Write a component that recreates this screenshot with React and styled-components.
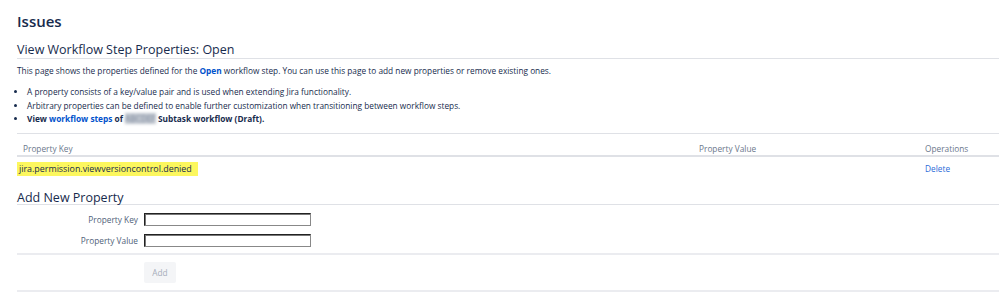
import React from 'react';
import styled, { createGlobalStyle } from 'styled-components';

const GlobalStyle = createGlobalStyle`
  html, body {
    margin: 0;
    padding: 0;
    background: #fff;
  }
  body {
    font-family: 'Open Sans', 'Noto Sans', sans-serif;
    color: #172b4d;
  }
`;

const App = () => {
  return (
    <>
      <GlobalStyle />
      <SPage>
        <STitle>Issues</STitle>
        <SHeading>View Workflow Step Properties: Open</SHeading>
        <SIntro>
          This page shows the properties defined for the <SStrongLink>Open</SStrongLink> workflow step. You can use
          this page to add new properties or remove existing ones.
        </SIntro>
        <SList>
          <li>A property consists of a key/value pair and is used when extending Jira functionality.</li>
          <li>Arbitrary properties can be defined to enable further customization when transitioning between workflow steps.</li>
          <li>
            <b>
              View <SStrongLink>workflow steps</SStrongLink> of <SBlur>ABCDEF</SBlur> Subtask workflow (Draft).
            </b>
          </li>
        </SList>

        <STable>
          <thead>
            <tr>
              <STh>Property Key</STh>
              <STh>Property Value</STh>
              <STh>Operations</STh>
            </tr>
          </thead>
          <tbody>
            <tr>
              <STd>
                <SHighlight>jira.permission.viewversioncontrol.denied</SHighlight>
              </STd>
              <STd></STd>
              <STd>
                <SLink>Delete</SLink>
              </STd>
            </tr>
          </tbody>
        </STable>

        <SHeading tight>Add New Property</SHeading>
        <SForm>
          <SField>
            <SLabel>Property Key</SLabel>
            <SInput />
          </SField>
          <SField>
            <SLabel>Property Value</SLabel>
            <SInput />
          </SField>
        </SForm>
        <SButtons>
          <SButton disabled>Add</SButton>
        </SButtons>
      </SPage>
    </>
  );
};

export default App;

const SPage = styled.div`
  padding: 9px 0 0 17px;
  width: 982px;
`;

const STitle = styled.h1`
  margin: 0;
  font-size: 15px;
  line-height: 25px;
  font-weight: 600;
`;

const SHeading = styled.h2.withConfig({ shouldForwardProp: (p) => p !== 'tight' })`
  margin: ${(props) => (props.tight ? '11px 0 0' : '9px 0 0')};
  font-size: 12.5px;
  line-height: ${(props) => (props.tight ? '12px' : '14px')};
  font-weight: 400;
  padding-bottom: ${(props) => (props.tight ? '0' : '1px')};
  border-bottom: 1px solid #dfe1e6;
`;

const SIntro = styled.p`
  margin: 6px 0 0;
  font-size: 8.3px;
  line-height: 12px;
`;

const SStrongLink = styled.span`
  color: #0052cc;
  font-weight: 700;
`;

const SBlur = styled.span`
  color: #7a869a;
  background: #c1c7d0;
  filter: blur(1.4px);
  font-weight: 400;
`;

const SList = styled.ul`
  margin: 8px 0 0;
  padding-left: 10px;
  font-size: 8.3px;
  line-height: 13.5px;
`;

const STable = styled.table`
  margin-top: 7px;
  width: 100%;
  border-collapse: collapse;
  border-top: 1px solid #dfe1e6;
  font-size: 8.3px;
`;

const STh = styled.th`
  text-align: left;
  font-weight: 400;
  color: #6b778c;
  line-height: 11px;
  padding: 9px 0 1px 6px;
  border-bottom: 2px solid #dfe1e6;
  &:nth-child(2) {
    width: 220px;
  }
  &:nth-child(3) {
    width: 74px;
  }
`;

const STd = styled.td`
  padding: 5px 0 5px 6px;
  line-height: 14px;
  vertical-align: top;
`;

const SHighlight = styled.span`
  display: inline-block;
  background: #fcf75e;
  margin-left: -6px;
  padding: 0 6px 0 2px;
  font-size: 8.9px;
`;

const SLink = styled.span`
  color: #2a6ad8;
`;

const SForm = styled.div`
  display: flex;
  flex-direction: column;
  gap: 8px;
  padding: 8px 0 6px;
  border-bottom: 2px solid #ebecf0;
`;

const SField = styled.div`
  display: flex;
  align-items: center;
  gap: 6px;
`;

const SLabel = styled.label`
  width: 121px;
  text-align: right;
  font-size: 8.3px;
  color: #505f79;
`;

const SInput = styled.input`
  box-sizing: border-box;
  width: 167px;
  height: 13px;
  margin: 0;
  padding: 0 2px;
  border: 1px solid #222;
  border-right-color: #888;
  border-bottom-color: #888;
  box-shadow: inset 1px 1px 0 #777;
  font-size: 8.3px;
`;

const SButtons = styled.div`
  padding: 7px 0 7px 127px;
  border-bottom: 2px solid #ebecf0;
`;

const SButton = styled.button`
  display: block;
  width: 32px;
  height: 21px;
  border: none;
  border-radius: 2px;
  background: #f4f5f7;
  color: #a5adba;
  font-family: inherit;
  font-size: 8.3px;
  padding: 0;
`;
